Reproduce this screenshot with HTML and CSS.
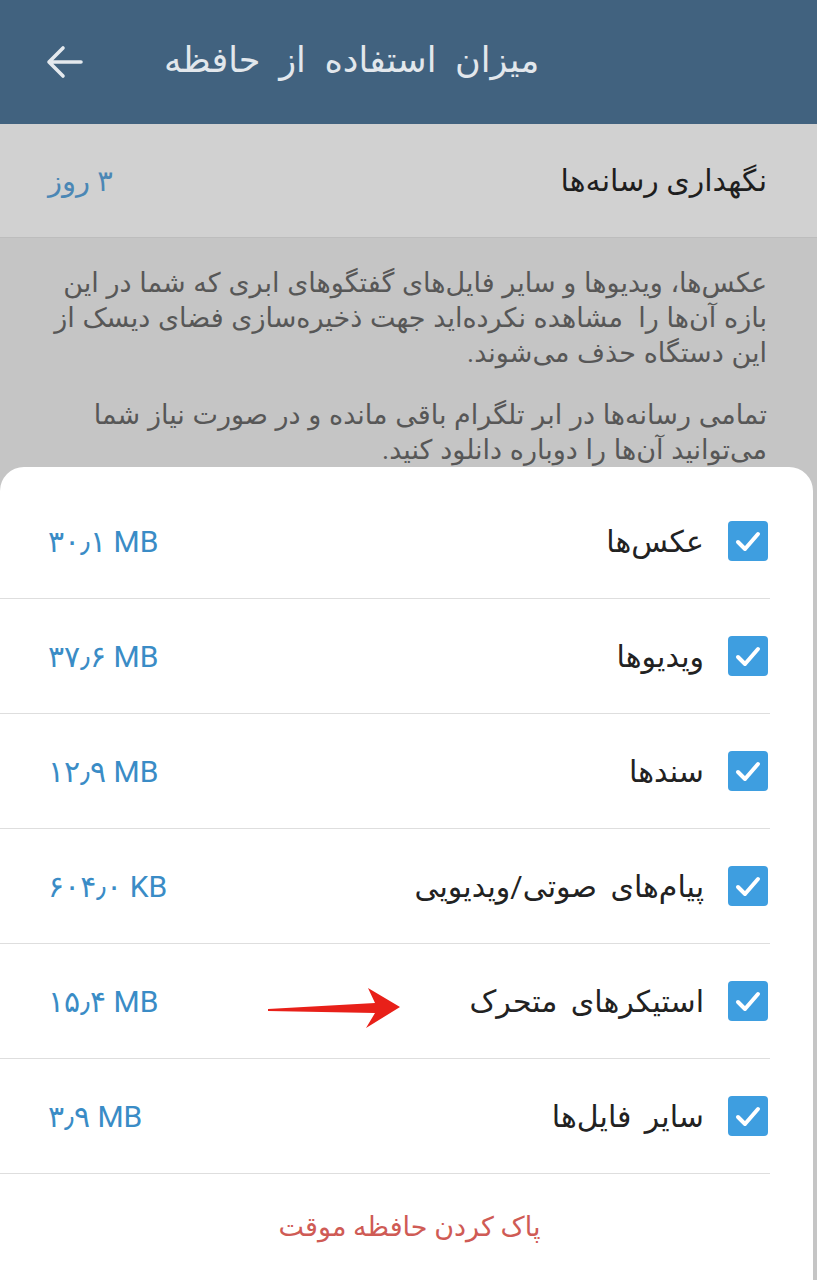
FILE: index.html
```html
<!DOCTYPE html>
<html lang="fa">
<head>
    <meta charset="utf-8">
    <title>میزان استفاده از حافظه</title>
    <link rel="stylesheet" href="styles.css">
</head>
<body>
    <div class="header">
        <svg class="back" width="40" height="36" viewBox="0 0 40 36">
            <path d="M37 18 H5 M19 4 L5 18 L19 32" fill="none" stroke="#e4e9ee" stroke-width="3.6" stroke-linecap="round" stroke-linejoin="round"/>
        </svg>
        <h1 class="title" dir="rtl">میزان استفاده از حافظه</h1>
    </div>

    <div class="keep-row" dir="rtl">
        <span class="keep-label">نگهداری رسانه‌ها</span>
        <span class="keep-value">۳ روز</span>
    </div>

    <div class="info" dir="rtl">
        <p>عکس‌ها، ویدیوها و سایر فایل‌های گفتگوهای ابری که شما در این<br>
        بازه آن‌ها را&nbsp; مشاهده نکرده‌اید جهت ذخیره‌سازی فضای دیسک از<br>
        این دستگاه حذف می‌شوند.</p>
        <p>تمامی رسانه‌ها در ابر تلگرام باقی مانده و در صورت نیاز شما<br>
        می‌توانید آن‌ها را دوباره دانلود کنید.</p>
    </div>

    <div class="sheet" dir="rtl">
        <div class="item">
            <span class="check"><svg width="40" height="40" viewBox="0 0 40 40"><path d="M10 21 L17 28 L30 13" fill="none" stroke="#fff" stroke-width="4" stroke-linecap="round" stroke-linejoin="round"/></svg></span>
            <span class="label">عکس‌ها</span>
            <span class="size" dir="ltr">۳۰٫۱ MB</span>
        </div>
        <div class="item">
            <span class="check"><svg width="40" height="40" viewBox="0 0 40 40"><path d="M10 21 L17 28 L30 13" fill="none" stroke="#fff" stroke-width="4" stroke-linecap="round" stroke-linejoin="round"/></svg></span>
            <span class="label">ویدیوها</span>
            <span class="size" dir="ltr">۳۷٫۶ MB</span>
        </div>
        <div class="item">
            <span class="check"><svg width="40" height="40" viewBox="0 0 40 40"><path d="M10 21 L17 28 L30 13" fill="none" stroke="#fff" stroke-width="4" stroke-linecap="round" stroke-linejoin="round"/></svg></span>
            <span class="label">سندها</span>
            <span class="size" dir="ltr">۱۲٫۹ MB</span>
        </div>
        <div class="item">
            <span class="check"><svg width="40" height="40" viewBox="0 0 40 40"><path d="M10 21 L17 28 L30 13" fill="none" stroke="#fff" stroke-width="4" stroke-linecap="round" stroke-linejoin="round"/></svg></span>
            <span class="label">پیام‌های صوتی/ویدیویی</span>
            <span class="size" dir="ltr">۶۰۴٫۰ KB</span>
        </div>
        <div class="item">
            <span class="check"><svg width="40" height="40" viewBox="0 0 40 40"><path d="M10 21 L17 28 L30 13" fill="none" stroke="#fff" stroke-width="4" stroke-linecap="round" stroke-linejoin="round"/></svg></span>
            <span class="label">استیکرهای متحرک</span>
            <span class="size" dir="ltr">۱۵٫۴ MB</span>
            <!-- red annotation arrow -->
            <svg class="arrow" width="150" height="50" viewBox="0 0 150 50">
                <polygon points="8,27 115,21 108,6 140,25 106,46 115,31 8,29" fill="#e82019"/>
            </svg>
        </div>
        <div class="item">
            <span class="check"><svg width="40" height="40" viewBox="0 0 40 40"><path d="M10 21 L17 28 L30 13" fill="none" stroke="#fff" stroke-width="4" stroke-linecap="round" stroke-linejoin="round"/></svg></span>
            <span class="label">سایر فایل‌ها</span>
            <span class="size" dir="ltr">۳٫۹ MB</span>
        </div>
        <div class="clear">پاک کردن حافظه موقت</div>
    </div>
</body>
</html>
```

FILE: styles.css
```css
body {
    margin: 0;
    width: 817px;
    height: 1280px;
    overflow: hidden;
    font-family: Roboto, "DejaVu Sans", sans-serif;
    background-color: #c5c5c5; /* dimmed page behind the sheet */
}

.header {
    height: 124px;
    background-color: #41627f;
    display: flex;
    align-items: center;
    padding-left: 44px;
    box-sizing: border-box;
}

.title {
    margin: 0 0 4px 80px;
    font-size: 35px;
    font-weight: normal;
    word-spacing: 10px;
    color: #e2e7ec;
}

.keep-row {
    height: 113px;
    background-color: #d1d1d1;
    display: flex;
    align-items: center;
    padding: 0 50px 0 48px;
    border-bottom: 1px solid #bdbdbd;
}

.keep-label {
    font-size: 30px;
    color: #1e1e1e;
}

.keep-value {
    margin-right: auto;
    font-size: 29px;
    color: #4b87b5;
}

.info {
    padding: 28px 50px 0 46px;
    color: #575757;
    font-size: 27px;
    line-height: 35px;
    word-spacing: 1px;
}

.info p {
    margin: 0 0 27px 0;
}

.sheet {
    position: fixed;
    top: 467px;
    left: 0;
    right: 4px;
    bottom: 0;
    background-color: #ffffff;
    border-radius: 24px 24px 0 0;
    padding-top: 17px;
}

.item {
    position: relative;
    height: 114px;
    display: flex;
    align-items: center;
    margin-right: 43px;
    padding-left: 48px;
    border-bottom: 1px solid #dedede;
}

.check {
    width: 40px;
    height: 40px;
    border-radius: 4px;
    background-color: #3e9ee0;
    display: flex;
    margin-right: 2px;
}

.label {
    margin-right: 24px;
    font-size: 30px;
    word-spacing: 6px;
    color: #222222;
}

.size {
    margin-right: auto;
    font-size: 30px;
    color: #3a8cc6;
}

.arrow {
    position: absolute;
    left: 260px;
    top: 38px;
}

.clear {
    height: 106px;
    display: flex;
    align-items: center;
    justify-content: center;
    padding-left: 6px;
    font-size: 27px;
    color: #cf5b55;
}
```
